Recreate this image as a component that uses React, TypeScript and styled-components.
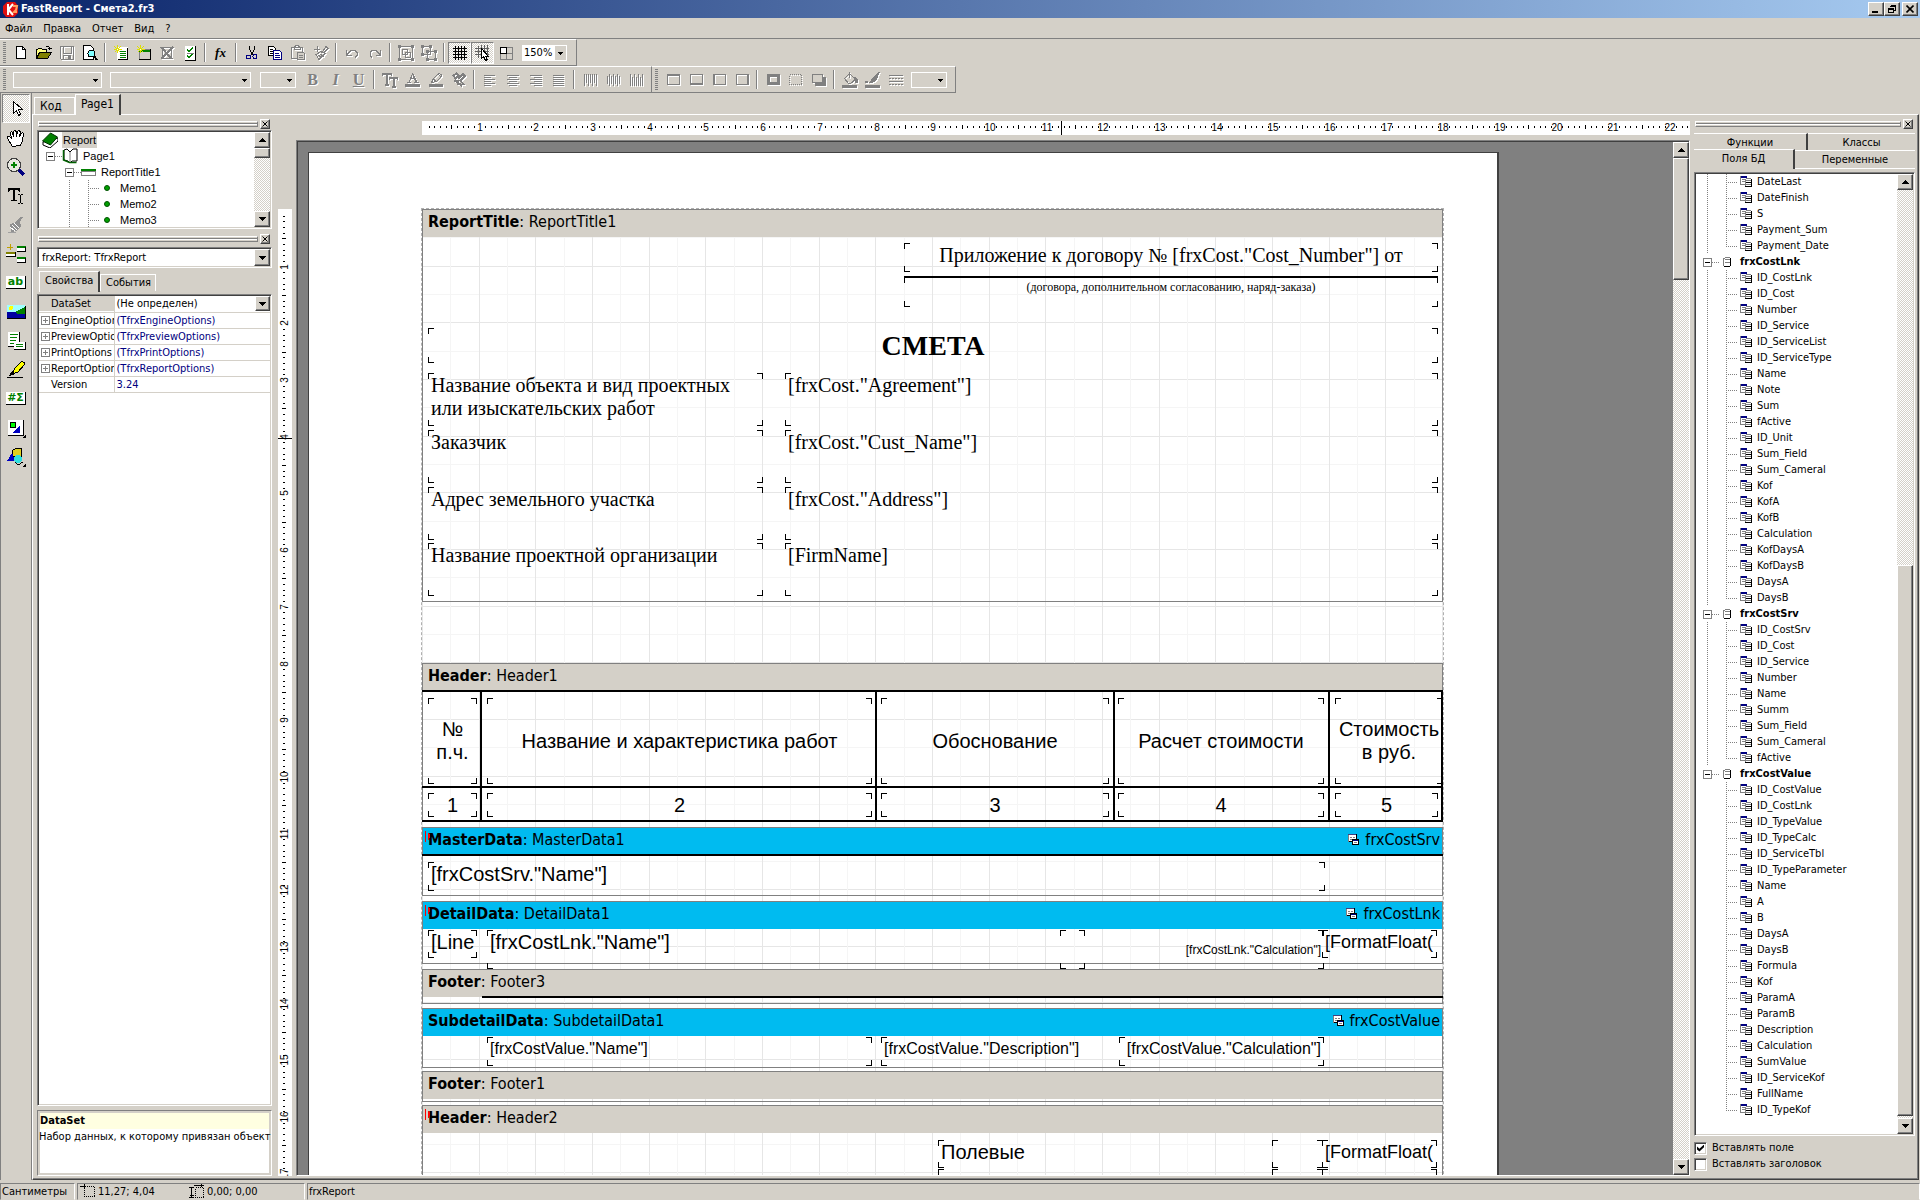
import React from "react";
import styled, { createGlobalStyle, css } from "styled-components";

const UI = `"DejaVu Sans Condensed", "Noto Sans", sans-serif`;
const SANS = `"Liberation Sans", Arial, sans-serif`;
const SERIF = `"Liberation Serif", "Times New Roman", serif`;
const FACE = "#d4d0c8";
const SHADE = "#808080";
const DARK = "#404040";

const GlobalStyle = createGlobalStyle`
  *, *::before, *::after { box-sizing: border-box; }
  body { margin: 0; background: ${FACE}; }
  button, input, select { font: inherit; color: inherit; margin: 0; padding: 0; border-radius: 0; }
  svg { display: block; flex: none; }
`;

const raised = css`
  background: ${FACE};
  border: 1px solid;
  border-color: #fff ${DARK} ${DARK} #fff;
  box-shadow: inset -1px -1px 0 ${SHADE};
`;
const sunken = css`
  border: 1px solid;
  border-color: ${SHADE} #fff #fff ${SHADE};
  box-shadow: inset 1px 1px 0 ${DARK}, inset -1px -1px 0 ${FACE};
  padding: 1px;
`;
const dither = css`
  background: repeating-conic-gradient(#fff 0 25%, ${FACE} 0 50%) 0 0 / 2px 2px;
`;

/* ---------- window frame ---------- */
const Window = styled.div`
  display: flex; flex-direction: column; height: 100vh; overflow: hidden;
  background: ${FACE}; color: #000; font: 11px/16px ${UI}; cursor: default;
`;
const TitleBar = styled.header`
  display: flex; align-items: center; flex: none; height: 18px; padding: 0 2px; gap: 2px;
  background: linear-gradient(90deg, #0a246a, #a6caf0);
`;
const TitleText = styled.h1`
  flex: 1; margin: 0; color: #fff; font: bold 11px/18px ${UI};
`;
const CaptionButton = styled.button<{ $apart?: boolean }>`
  ${raised}
  display: grid; place-items: center; width: 16px; height: 14px;
  margin-left: ${p => (p.$apart ? 0 : -2)}px;
`;
const MenuBar = styled.nav`
  display: flex; flex: none; height: 20px; gap: 1px;
`;
const MenuItem = styled.button`
  border: 0; background: none; padding: 0 5px; line-height: 19px;
`;
const Dock = styled.div`
  flex: none; border-top: 1px solid ${SHADE};
`;
const DockRow = styled.div`display: flex;`;
const Toolbar = styled.div`
  display: flex; align-items: center; height: 27px; padding: 0 4px 0 3px;
  border: 1px solid; border-color: #fff ${SHADE} ${SHADE} #fff; border-left-width: 0;
`;
const GripDots = styled.span`
  width: 3px; height: 21px; margin-right: 3px;
  background: repeating-linear-gradient(${SHADE} 0 1px, transparent 1px 2px);
`;
const Sep = styled.span`
  width: 2px; height: 19px; margin: 0 3px; background: ${SHADE}; border-right: 1px solid #fff;
`;
const ToolButton = styled.button<{ $on?: boolean }>`
  display: grid; place-items: center; width: 23px; height: 22px; border: 0; background: none;
  ${p => p.$on && css`${dither} border: 1px solid; border-color: ${SHADE} #fff #fff ${SHADE};`}
  &:disabled svg { filter: drop-shadow(1px 1px 0 #fff); }
`;
const FlatCombo = styled.label<{ $w: number; $filled?: boolean; $gap?: number }>`
  display: flex; position: relative; width: ${p => p.$w}px; height: 16px; margin: 0 ${p => p.$gap ?? 4}px;
  border: 1px solid #fff; background: ${p => (p.$filled ? "#fff" : FACE)};
  & > svg { position: absolute; right: 0; top: 0; width: 11px; height: 14px; background: ${FACE}; pointer-events: none; }
`;
const BareSelect = styled.select`
  appearance: none; border: 0; background: none; width: 100%; outline: 0; padding-left: 1px; font-size: 11px; line-height: 14px;
`;

/* ---------- body ---------- */
const Body = styled.div`display: flex; flex: 1; min-height: 0;`;
const Palette = styled.div`
  display: flex; flex-direction: column; flex: none; width: 32px; padding: 1px 1px 0;
  border-left: 1px solid ${SHADE}; border-right: 1px solid ${SHADE};
`;
const PaletteButton = styled.button<{ $on?: boolean }>`
  display: grid; place-items: center; height: 29px; border: 0; background: none;
  ${p => p.$on && css`${dither} border: 1px solid; border-color: ${SHADE} #fff #fff ${SHADE};`}
`;
const Designer = styled.div`display: flex; flex-direction: column; flex: 1; min-width: 0;`;
const TabStrip = styled.div<{ $h: number }>`
  display: flex; align-items: flex-end; flex: none; height: ${p => p.$h}px; padding-left: 2px;
`;
const Tab = styled.button<{ $on?: boolean; $w: number; $big?: boolean }>`
  width: ${p => p.$w}px; height: ${p => (p.$on ? 21 : 17)}px; text-align: left; padding: 0 5px;
  font-size: ${p => (p.$big ? 12 : 11)}px; line-height: 16px; white-space: nowrap;
  background: ${FACE}; border: 1px solid #fff; border-bottom: 0;
  border-right: ${p => (p.$on ? `2px solid ${DARK}` : "1px solid #fff")};
  ${p => p.$on && css`position: relative; margin-bottom: -1px; padding-bottom: 2px;`}
`;
const TabPage = styled.div`
  display: flex; flex: 1; min-height: 0; margin-right: 1px;
  border: 1px solid; border-color: #fff ${DARK} ${DARK} #fff; box-shadow: inset -1px -1px 0 ${SHADE};
`;
const SidePanel = styled.aside<{ $side: "l" | "r" }>`
  display: flex; flex-direction: column; flex: none; min-height: 0;
  width: ${p => (p.$side === "l" ? 241 : 227)}px;
  padding: ${p => (p.$side === "l" ? "3px 2px 3px 4px" : "3px 3px 7px 3px")};
`;
const Grip = styled.div`
  display: flex; align-items: center; flex: none; height: 12px; gap: 2px; padding: 0 2px 0 1px;
`;
const GripLines = styled.span`
  flex: 1; height: 6px; border: 1px solid; border-color: #fff ${SHADE} ${SHADE} #fff;
  background: linear-gradient(${FACE} 0 1px, ${SHADE} 1px 2px, #fff 2px 3px, ${FACE} 3px);
`;
const CloseButton = styled.button`
  ${raised}
  display: grid; place-items: center; width: 10px; height: 10px;
`;

/* ---------- scroll bar ---------- */
const ScrollTrack = styled.div`
  ${dither}
  display: flex; flex-direction: column; flex: none; width: 16px;
`;
const ScrollArrow = styled.button`
  ${raised}
  display: grid; place-items: center; flex: none; width: 16px; height: 16px;
`;
const ScrollGap = styled.div<{ $grow: number }>`flex: ${p => p.$grow} 0 0;`;
const ScrollThumb = styled.div<{ $grow: number }>`
  ${raised}
  flex: ${p => p.$grow} 0 0;
`;
function Triangle({ up }: { up?: boolean }) {
  return (
    <svg width="7" height="4" shapeRendering="crispEdges">
      {[0, 1, 2, 3].map(i => (
        <rect key={i} x={up ? 3 - i : i} y={i} width={up ? 1 + 2 * i : 7 - 2 * i} height="1" />
      ))}
    </svg>
  );
}
function ScrollBar({ before, thumb, after }: { before: number; thumb: number; after: number }) {
  return (
    <ScrollTrack>
      <ScrollArrow aria-label="Вверх"><Triangle up /></ScrollArrow>
      <ScrollGap $grow={before} />
      <ScrollThumb $grow={thumb} />
      <ScrollGap $grow={after} />
      <ScrollArrow aria-label="Вниз"><Triangle /></ScrollArrow>
    </ScrollTrack>
  );
}

/* ---------- trees ---------- */
const TreeBox = styled.div<{ $h?: number }>`
  ${sunken}
  display: flex; background: #fff; overflow: hidden;
  ${p => (p.$h ? css`flex: none; height: ${p.$h}px;` : css`flex: 1; min-height: 0;`)}
`;
const TreeRows = styled.ul<{ $face?: string }>`
  flex: 1; margin: 0; padding: 0; list-style: none; overflow: hidden; white-space: nowrap;
  font-family: ${p => p.$face ?? UI};
`;
const TreeRow = styled.li<{ $pad?: number }>`
  display: flex; align-items: center; height: 16px; padding-left: ${p => p.$pad ?? 0}px;
`;
const TreeLine = styled.span<{ $w: number; $v?: "full" | "top" | "none"; $h?: boolean }>`
  flex: none; align-self: stretch; width: ${p => p.$w}px;
  background:
    repeating-linear-gradient(${SHADE} 0 1px, transparent 1px 2px) 0 0 / 1px ${p => (p.$v === "none" ? 0 : p.$v === "top" ? "9px" : "100%")} no-repeat,
    repeating-linear-gradient(90deg, ${SHADE} 0 1px, transparent 1px 2px) 0 8px / ${p => (p.$h ? "100%" : 0)} 1px no-repeat;
`;
const TreeText = styled.span<{ $bold?: boolean; $sel?: boolean; $gap?: number }>`
  margin-left: ${p => p.$gap ?? 4}px; padding: 0 1px; font-weight: ${p => (p.$bold ? "bold" : "normal")};
  background: ${p => (p.$sel ? FACE : "none")};
`;
function Toggle({ plus }: { plus?: boolean }) {
  return (
    <svg width="9" height="9" shapeRendering="crispEdges">
      <rect width="9" height="9" fill={SHADE} />
      <rect x="1" y="1" width="7" height="7" fill="#fff" />
      <rect x="2" y="4" width="5" height="1" fill={plus ? SHADE : "#000"} />
      {plus && <rect x="4" y="2" width="1" height="5" fill={SHADE} />}
    </svg>
  );
}
function FieldIcon() {
  return (
    <svg width="12" height="12" shapeRendering="crispEdges">
      <rect x="0" y="0" width="7" height="9" fill={SHADE} />
      <rect x="1" y="2" width="6" height="6" fill="#fff" />
      <rect x="1" y="0" width="6" height="2" fill="#000080" />
      <path d="M2 3h3v1h-3zM2 5h3v1h-3z" fill={SHADE} />
      <path d="M6 2h5v1h-5z" fill={SHADE} />
      <path d="M5 6h7v1h-7zM5 10h7v1h-7zM11 3h1v8h-1z" />
      <path d="M6 3h5v3h-5zM6 7h5v3h-5z" fill="#fff" />
      <path d="M6 4h5v1h-5zM6 8h5v1h-5zM5 3h1v7h-1z" fill={SHADE} />
    </svg>
  );
}
function DatasetIcon() {
  return (
    <svg width="9" height="10" shapeRendering="crispEdges">
      <path d="M1 1h6v8h-6z" fill="#fff" />
      <path d="M2 0h5v1h-5zM0 1h2v1h-2zM0 2h1v7h-1zM2 2h5v1h-5zM2 5h5v1h-5z" fill={SHADE} />
      <path d="M7 1h1v8h-1zM1 9h6v1h-6z" />
    </svg>
  );
}
const BandDataIcon = () => (
  <svg width="11" height="11" shapeRendering="crispEdges">
    <rect width="9" height="8" fill={SHADE} />
    <rect x="1" y="1" width="7" height="6" fill="#fff" />
    <path d="M8 0h1v8h-1zM1 7h8v1h-8z" />
    <rect width="8" height="1" fill="#404080" />
    <path d="M2 3h2v1h-2zM5 3h2v1h-2zM2 5h2v1h-2z" fill={SHADE} />
    <rect x="4" y="5" width="7" height="6" />
    <rect x="5" y="6" width="5" height="4" fill="#fff" />
    <rect x="5" y="6" width="5" height="1" fill="#000080" />
    <rect x="6" y="8" width="3" height="1" fill={SHADE} />
  </svg>
);

/* ---------- object inspector ---------- */
const ComboBox = styled.label`
  ${sunken}
  display: flex; position: relative; flex: none; height: 21px; margin-top: 2px; padding-left: 3px; background: #fff;
`;
const Drop = styled.span`
  ${raised}
  display: grid; place-items: center; position: absolute; right: 1px; top: 1px; bottom: 1px; width: 16px; pointer-events: none;
`;
const GridBox = styled.div`
  ${sunken}
  flex: 1; min-height: 0; margin-top: 3px; background: #fff;
`;
const PropTable = styled.table`
  width: 100%; table-layout: fixed; border-collapse: collapse; border-spacing: 0;
  th, td { height: 16px; padding: 0; border-bottom: 1px solid ${FACE}; line-height: 15px; text-align: left; font-weight: normal; overflow: hidden; white-space: nowrap; }
  th { width: 75px; border-right: 1px solid ${FACE}; }
`;
const PropName = styled.span<{ $sel?: boolean }>`
  display: flex; align-items: center; gap: 1px; height: 15px; padding-left: 2px; overflow: hidden; background: ${p => (p.$sel ? FACE : "none")};
`;
const NoToggle = styled.span`width: 9px; flex: none;`;
const PropValue = styled.span<{ $sel?: boolean }>`
  display: flex; position: relative; height: 15px; padding-left: 2px; color: ${p => (p.$sel ? "#000" : "#000080")};
  ${Drop} { top: 0; right: 0; bottom: 0; width: 15px; }
`;
const HintBox = styled.div`
  flex: none; height: 66px; margin-top: 4px; padding: 2px 0 2px 1px; background: #fff; overflow: hidden; white-space: nowrap;
  border: 1px solid; border-color: ${SHADE} #fff #fff ${SHADE}; box-shadow: inset 0 0 0 2px ${FACE};
`;
const HintTitle = styled.div`background: #ffffe1; font-weight: bold; margin: 0 2px 0 1px;`;

/* ---------- work area ---------- */
const Center = styled.main`
  flex: 1; min-width: 0; display: grid; padding: 6px 1px 3px 4px;
  grid-template: 14px minmax(0, 1fr) / 14px minmax(0, 1fr); gap: 5px 4px;
`;
const TopRuler = styled.div`grid-column: 2; margin-left: 126px; background: #fff; overflow: hidden;`;
const SideRuler = styled.div`grid-row: 2; margin-top: 69px; background: #fff; overflow: hidden;`;
const Workspace = styled.div`
  grid-row: 2; grid-column: 2; display: flex; min-height: 0; background: ${SHADE};
  border: 1px solid; border-color: ${SHADE} #fff #fff ${SHADE}; box-shadow: inset 1px 1px 0 ${DARK};
  padding: 1px 0 0 1px;
`;
const Canvas = styled.div`flex: 1; min-width: 0; overflow: hidden; padding: 10px;`;
const Paper = styled.div`
  width: 1191px; padding: 55px 53px 0 112px; background: #fff;
  border: 1px solid ${DARK}; border-right-width: 2px; border-bottom: 0;
`;
/* three centimetres make one 170px tile at this zoom */
const Margins = styled.div`
  border: 1px dashed #b0b0b0; border-bottom: 0;
  background:
    linear-gradient(90deg, #e6e6e6 0 1px, transparent 1px 28px, #f5f5f5 28px 29px, transparent 29px 57px, #e6e6e6 57px 58px, transparent 58px 85px, #f5f5f5 85px 86px, transparent 86px 113px, #e6e6e6 113px 114px, transparent 114px 142px, #f5f5f5 142px 143px, transparent 143px) 0 0 / 170px 100% ,
    linear-gradient(#e6e6e6 0 1px, transparent 1px 28px, #f5f5f5 28px 29px, transparent 29px 57px, #e6e6e6 57px 58px, transparent 58px 85px, #f5f5f5 85px 86px, transparent 86px 113px, #e6e6e6 113px 114px, transparent 114px 142px, #f5f5f5 142px 143px, transparent 143px) 0 0 / 100% 170px;
`;
const BandBox = styled.section<{ $gap: number }>`margin-top: ${p => p.$gap}px; border: 1px solid ${SHADE};`;
const BandHead = styled.div<{ $data?: boolean }>`
  display: flex; position: relative; align-items: center; gap: 6px; height: 27px; padding: 0 2px 4px 5px;
  background: ${p => (p.$data ? "#00bbf0" : FACE)}; font: 16px/22px ${UI};
`;
const BandName = styled.span`flex: 1;`;
const Mark = styled.svg`position: absolute; left: 2px; top: 3px; z-index: 1;`;
const BandBody = styled.div<{ $h: number }>`position: relative; height: ${p => p.$h}px;`;

type MemoProps = { $x: number; $y: number; $w: number; $h: number; $font?: "serif" | "sans"; $size?: number; $align?: string; $mid?: boolean; $bold?: boolean };
const k = "linear-gradient(#000 0 0)";
/* report objects lie on a free canvas and show only their corners */
const Memo = styled.div<MemoProps>`
  position: absolute; left: ${p => p.$x}px; top: ${p => p.$y}px; width: ${p => p.$w}px; height: ${p => p.$h}px;
  display: flex; align-items: ${p => (p.$mid ? "center" : "flex-start")};
  justify-content: ${p => p.$align ?? "flex-start"}; text-align: ${p => (p.$align === "center" ? "center" : "left")};
  padding: ${p => (p.$mid ? 0 : 1)}px 3px 0; white-space: pre;
  font: ${p => (p.$bold ? "bold" : "normal")} ${p => p.$size ?? 20}px / ${p => (p.$size === 16 ? 22 : p.$size === 12 ? 18 : 23)}px ${p => (p.$font === "sans" ? SANS : SERIF)};
  background:
    ${k} 0 0 / 6px 1px, ${k} 0 0 / 1px 6px, ${k} 100% 0 / 6px 1px, ${k} 100% 0 / 1px 6px,
    ${k} 0 100% / 6px 1px, ${k} 0 100% / 1px 6px, ${k} 100% 100% / 6px 1px, ${k} 100% 100% / 1px 6px;
  background-repeat: no-repeat;
`;
const Rule = styled.div<{ $x: number; $y: number; $w: number; $h: number }>`
  position: absolute; left: ${p => p.$x}px; top: ${p => p.$y}px; width: ${p => p.$w}px; height: ${p => p.$h}px; background: #000;
`;

const CM = 56.69;
function Ticks({ vertical, cm, cursor }: { vertical?: boolean; cm: number; cursor: number }) {
  const marks: React.ReactNode[] = [];
  for (let i = 1; i < cm * 10; i++) {
    const at = Math.round(1 + (i * CM) / 10);
    if (i % 10 === 0) {
      marks.push(
        <text key={i} textAnchor="middle" fontSize="10" fontFamily="Liberation Sans, sans-serif"
          transform={vertical ? `translate(10 ${at}) rotate(-90)` : `translate(${at} 10)`}>{i / 10}</text>
      );
    } else {
      const len = i % 5 === 0 ? 4 : 2;
      const off = len === 4 ? 4 : 5;
      marks.push(vertical
        ? <rect key={i} x={off} y={at} width={len} height="1" />
        : <rect key={i} x={at} y={off} width="1" height={len} />);
    }
  }
  const c = Math.round(1 + cursor * CM);
  const size = Math.ceil(cm * CM);
  return (
    <svg width={vertical ? 14 : size} height={vertical ? size : 14} shapeRendering="crispEdges">
      {marks}
      {vertical ? <rect x="0" y={c - 1} width="14" height="1" /> : <rect x={c - 1} y="0" width="1" height="14" />}
    </svg>
  );
}

function Band({ gap = 0, kind, name, data, mark, h, children }: {
  gap?: number; kind: string; name: string; data?: string; mark?: boolean; h: number; children?: React.ReactNode;
}) {
  return (
    <BandBox $gap={gap}>
      <BandHead $data={kind.endsWith("Data")}>
        {mark && (
          <Mark width="6" height="11" shapeRendering="crispEdges" fill="#f00">
            <path d="M0 0h1v11h-1zM3 2h1v7h-1zM4 3h1v4h-1z" />
          </Mark>
        )}
        <BandName><b>{kind}</b>: {name}</BandName>
        {data && <><BandDataIcon /><span>{data}</span></>}
      </BandHead>
      <BandBody $h={h}>{children}</BandBody>
    </BandBox>
  );
}

/* ---------- right panel ---------- */
const WideTabs = styled.div<{ $first?: boolean }>`
  display: flex; align-items: flex-end; flex: none; height: ${p => (p.$first ? 20 : 18)}px;
  margin-top: ${p => (p.$first ? 1 : 0)}px; border-bottom: ${p => (p.$first ? 0 : 1)}px solid #fff;
`;
const WideTab = styled.button<{ $on?: boolean; $edge?: boolean; $w?: number }>`
  flex: ${p => (p.$w ? `0 0 ${p.$w}px` : "1")}; height: ${p => (p.$on ? 20 : 18)}px; line-height: 17px; padding: 0;
  background: ${FACE}; border: 0; border-top: 1px solid #fff;
  ${p => p.$edge && css`border-right: 2px solid ${DARK};`}
  ${p => p.$on && css`position: relative; margin-bottom: -1px; padding-bottom: 4px;`}
`;
const CheckLine = styled.label`
  display: flex; align-items: center; flex: none; height: 16px; gap: 5px;
`;
const CheckInput = styled.input`
  ${sunken}
  appearance: none; width: 13px; height: 13px; background: #fff; display: grid; place-items: center;
  &:checked::before { content: ""; width: 7px; height: 7px; background: #000; clip-path: polygon(0 30%, 35% 60%, 100% 0, 100% 40%, 35% 100%, 0 70%); }
`;
const Checks = styled.div`margin-top: 4px; flex: none;`;

/* ---------- status bar ---------- */
const StatusBar = styled.footer`display: flex; flex: none; height: 20px; padding-top: 3px; gap: 2px;`;
const StatusCell = styled.div<{ $w?: number }>`
  display: flex; align-items: center; gap: 4px; padding: 0 1px; line-height: 16px; white-space: nowrap;
  ${p => (p.$w ? css`width: ${p.$w}px;` : css`flex: 1;`)}
  border: 1px solid; border-color: ${SHADE} #fff ${FACE} ${SHADE};
`;
const StatusPair = styled.span`display: flex; gap: 2px; width: 105px; padding-left: 1px;`;

/* ---------- icons ---------- */
const G = "#808080";
const Ico = ({ children, s = 16 }: { children: React.ReactNode; s?: number }) => (
  <svg width={s} height={s} viewBox={`0 0 ${s} ${s}`} shapeRendering="crispEdges" fill="none">{children}</svg>
);
const O = (d: string, stroke = "#000", fill = "none", w = 1) => <path d={d} stroke={stroke} fill={fill} strokeWidth={w} />;
const F = (d: string, fill = "#000") => <path d={d} fill={fill} />;
const star = <>{O("M4.5 0v8M0.5 4.5h8M1.5 1.5l6 6M7.5 1.5l-6 6", "#e0e000")}{F("M4 4h1v1h-1z", "#fff")}</>;
const sheet = "M3.5 1.5h6l3 3v9h-9z";

const icons: Record<string, React.ReactNode> = {
  new: <Ico>{O(sheet, "#000", "#fff")}{O("M9.5 1.5v3h3")}</Ico>,
  open: <Ico>{O("M.5 13.500v-9h1l1-1h3l1 1h4v3", "#000", "#ffff80")}{O("M.5 13.500l3-6h12l-4 6z", "#000", "#808000")}{O("M9.500 2.500l1-1h2l1 1v2M11.500 3.500h4")}</Ico>,
  save: <Ico>{O("M1.5 1.5h13v13h-12l-1-1zM4 2v6h8v-6M4.500 14v-4h7v4", G)}{F("M9 11h2v3h-2z", G)}</Ico>,
  preview: <Ico>{O("M1.500 .5h7l3 3v11h-10z", "#000", "#fff")}<circle cx="9.500" cy="8.500" r="3.500" stroke="#000" fill="#80ffff" />{O("M12 11l3 4", "#000", "none", 2)}</Ico>,
  addpage: <Ico>{O("M4.500 2.500h10v12h-10z", "#fff", "#fff")}{O("M14.500 3v12M5 14.500h10")}{O("M7 6.500h6M7 8.500h6M7 10.500h6M7 12.500h6", "#008000")}{star}</Ico>,
  adddlg: <Ico>{O("M3.500 4.500h11v10h-11z", G, "#d4d0c8")}{O("M3 5.500h12", "#008000", "none", 2)}{O("M14.500 4v11M3 14.500h12")}{star}</Ico>,
  delpage: <Ico>{O("M3.500 2.500h9v11h-9z", G)}{O("M2 2l11 12M14 2l-12 12", G, "none", 2)}</Ico>,
  settings: <Ico>{F("M3 1h10v14h-10z", "#fff")}{O("M13.500 1v14M3 15.500h11")}{O("M5 4.500l2 2 4-4M5 10.500l2 2 4-4", "#008000")}{O("M5 8.500h7", G)}</Ico>,
  cut: <Ico>{O("M5.500 .5v4l4 6M10.500 .5v4l-4 6", "#000")}<circle cx="4.500" cy="12" r="2" stroke="#000080" /><circle cx="11" cy="11.500" r="2" stroke="#000080" /></Ico>,
  copy: <Ico>{O("M1.500 1.500h5l2 2v7h-7z", "#000", "#fff")}{O("M3 4.500h3M3 6.500h4M3 8.500h3")}{O("M6.500 5.500h6l2 2v7h-8z", "#000080", "#fff")}{O("M8 8.500h4M8 10.500h5M8 12.500h5", "#000080")}</Ico>,
  paste: <Ico>{O("M1.500 2.500h11v11h-11zM4 4.500h6v-2l-2-2h-2l-2 2z", G)}{O("M7.500 7.500h6l1 1v6h-7z", G, "#d4d0c8")}{O("M9 10.500h4M9 12.500h4", G)}</Ico>,
  brush: <Ico>{O("M1 4.500h6M4.500 1v6M13 1.500l2 2-4 4 1 1-6 6-3-5 5-3 1 1z", G)}{O("M5 10l4 3M7 9l4 3", G)}</Ico>,
  undo: <Ico>{O("M2.500 5v5h5M3 9.500l4-4h4l2 2v3l-2 2", G)}</Ico>,
  redo: <Ico>{O("M13.500 5v5h-5M13 9.500l-4-4h-4l-2 2v3l2 2", G)}</Ico>,
  group: <Ico>{O("M1.500 2v12M2 1.500h12M14.500 2v12M2 14.500h12", G)}{O("M4.500 4.500h5v5h-5zM7.500 7.500h5v5h-5z", G)}{F("M0 0h3v3h-3zM13 0h3v3h-3zM0 13h3v3h-3zM13 13h3v3h-3z", G)}</Ico>,
  ungroup: <Ico>{O("M1.500 1.500h8v8h-8zM6.500 6.500h8v8h-8z", G)}{F("M0 0h3v3h-3zM8 0h3v3h-3zM0 8h3v3h-3zM5 5h3v3h-3zM13 5h3v3h-3zM13 13h3v3h-3zM5 13h3v3h-3z", G)}</Ico>,
  grid: <Ico>{O("M3.500 1v14M6.500 1v14M9.500 1v14M12.500 1v14M1 3.500h14M1 6.500h14M1 9.500h14M1 12.500h14")}</Ico>,
  snap: <Ico>{O("M3.500 1v12M6.500 0v12M9.500 0v12M12.500 0v12M0 3.500h14M0 6.500h14M0 9.500h14", "#606060")}{O("M6.500 3.500v10l2-2 2 4 2-1-2-3h3z", "#000", "#fff")}</Ico>,
  fit: <Ico>{O("M8.500 2v12M14.500 2v12M2.500 8v6M2 8.500h12M8 2.500h6M2 14.500h13", G)}{O("M2.500 2.500h6v6h-6z", "#000", "#fff")}</Ico>,
  size: <Ico>{F("M0 1h10v3h-1v-1h-3v9h1v2h-4v-2h1v-9h-3v1h-1zM7 5h9v3h-1v-1h-2v7h1v2h-4v-2h1v-7h-3v1h-1z", G)}</Ico>,
  fontcolor: <Ico>{O("M4 10l3.500-8 3.500 8M5 6.500h5M2 10.500h4M9 10.500h5M8 2l4 8", G)}{F("M0 12h15v3h-15z", G)}</Ico>,
  marker: <Ico>{O("M3.500 10.500l2-4 5-5 3 1v2l-5 5zM5 7l3 2M10 2l3 3", G)}{F("M1 12h14v3h-14z", G)}</Ico>,
  rotate: <Ico>{O("M2.500 3.500l3-2 2 2-3 3zM7 7l5-5 2 2-5 5M4 8l7 6M9 8l4 5M3 9h4v4", G, "none", 2)}</Ico>,
  left: <Ico>{O("M2 3.500h11M2 5.500h7M2 7.500h11M2 9.500h7M2 11.500h11M2 13.500h7", G)}</Ico>,
  center: <Ico>{O("M2 3.500h12M4 5.500h8M2 7.500h12M4 9.500h8M2 11.500h12M4 13.500h8", G)}</Ico>,
  right: <Ico>{O("M2 3.500h12M6 5.500h8M2 7.500h12M6 9.500h8M2 11.500h12M6 13.500h8", G)}</Ico>,
  justify: <Ico>{O("M2 3.500h11M2 5.500h11M2 7.500h11M2 9.500h11M2 11.500h11M2 13.500h11", G)}</Ico>,
  vtop: <Ico>{O("M2.500 2v12M4.500 2v9M6.500 2v12M8.500 2v9M10.500 2v12M12.500 2v9M14.500 2v12", G)}</Ico>,
  vmid: <Ico>{O("M2.500 4v8M4.500 2v12M6.500 4v8M8.500 2v12M10.500 4v8M12.500 2v12M14.500 4v8", G)}</Ico>,
  vbot: <Ico>{O("M2.500 2v12M4.500 5v9M6.500 2v12M8.500 5v9M10.500 2v12M12.500 5v9M14.500 2v12", G)}</Ico>,
  ftop: <Ico>{O("M2.500 3v9.500h12v-9.500", G)}{F("M2 2h13v2h-13z", G)}</Ico>,
  fbottom: <Ico>{O("M2.500 13v-10.500h12v10.500", G)}{F("M2 11h13v2h-13z", G)}</Ico>,
  fleft: <Ico>{O("M3 2.500h11.500v10h-11.500", G)}{F("M2 2h2v11h-2z", G)}</Ico>,
  fright: <Ico>{O("M13 2.500h-10.500v10h10.500", G)}{F("M13 2h2v11h-2z", G)}</Ico>,
  fall: <Ico>{O("M3.500 3.500h10v8h-10z", G, "none", 3)}</Ico>,
  fnone: <Ico><path d="M1.500 2.500h12v10h-12z" stroke={G} strokeDasharray="1 1" /></Ico>,
  fshadow: <Ico>{F("M4 5h11v9h-11z", G)}{O("M1.500 2.500h10v8h-10z", G, "#d4d0c8")}</Ico>,
  fill: <Ico>{O("M2.500 6.500l5-5 6 6-5 4h-2zM7 0v6M12 5l3 2v4", G)}{F("M12 6h3v5h-2zM0 13h15v3h-15z", G)}</Ico>,
  pen: <Ico>{F("M6 8l7-8h2l-4 9-4 2h-3z", G)}{F("M0 9h3v2h-3zM0 13h15v3h-15z", G)}</Ico>,
  lines: <Ico>{O("M1 3.500h14", G)}<path d="M1 6.500h14M1 12.500h14" stroke={G} strokeDasharray="2 1" />{O("M1 9.500h14", G)}</Ico>,
};

const paletteIcons: Record<string, React.ReactNode> = {
  "Выбор": <Ico s={20}>{O("M7.500 2.500v12l3-3 2 5 2-1-2-5h4z", "#000", "#fff")}</Ico>,
  "Рука": <Ico s={20}>{O("M6.500 18.500l-5-8v-2h2l2 2-1-6 1-1 1 1 1 4v-5l1-1 2 1v5l1-5 1-1 2 1-1 5 2-3 1-1 1 1-1 7-2 5z", "#000", "#fff")}</Ico>,
  "Масштаб": <Ico s={20}><circle cx="8" cy="8" r="6.500" stroke="#404040" fill="#e8e8e0" />{O("M5 8h6M8 5v6", "#008000", "none", 2)}{O("M13 13l5 5", "#000080", "none", 3)}</Ico>,
  "Текст": <Ico s={20}>{F("M2 2h12v4h-1l-1-2h-3v10h2v1h-6v-1h2v-10h-3l-1 2h-1z")}{O("M12 8.500h2M15 8.500h2M14.500 9v8M12 17.500h2M15 17.500h2")}</Ico>,
  "Формат": <Ico s={20}>{F("M4 9l6-2 4-5h3l-3 5 1 4-5 5-5 1z", "#909090")}{O("M4 12l5 4M6 10l5 5M8 8l5 5", "#fff")}{O("M2 17.500h8", "#a0a0a0")}</Ico>,
  "Бэнд": <Ico s={20}>{O("M1 3.500h6M4.500 0v6", "#c0a000")}{F("M0 8h9v2h-9z", "#808000")}{F("M0 10h9v2h-9zM11 4h8v3h-8zM11 15h8v3h-8z", "#fff")}{F("M11 2h9v2h-9zM11 13h9v2h-9z", "#008000")}{O("M0 12.500h10M11 7.500h9M11 18.500h9M19.500 3v5M19.500 14v5M9.500 8v5")}</Ico>,
  "Рисунок": <Ico s={20}>{F("M1 3h18v7h-18z", "#a0ffff")}{F("M1 10h18v6h-18z", "#0000a0")}{F("M9 10l10-5v7h-8z", "#008000")}<circle cx="5" cy="6" r="2" fill="#ff0" />{O("M1 16.500h19M19.500 4v12")}</Ico>,
  "Вложенный отчет": <Ico s={20}>{F("M2 1h12v14h-12z", "#fff")}{O("M13.500 1v14M2 15.500h12")}{O("M4 3.500h8M4 6.500h7M4 9.500h6M4 12.500h4", "#008000")}{F("M8 11h11v7h-11z", "#fff")}{O("M8 18.500h12M19.500 11v8")}{O("M10 13.500h7M10 15.500h7", "#008000")}</Ico>,
  "Маркер": <Ico s={20}>{O("M6.500 13.500l2-5 7-7 3 1v2l-7 8z", "#000", "#ff0")}{F("M3 16l3-5 3 3z")}{O("M1 17.500h16")}</Ico>,
  "Фигура": <Ico s={20}>{F("M2 2h15v15h-15z", "#fff")}{O("M2 17.500h16M17.500 2v16")}<circle cx="7" cy="7" r="3" fill="#0f0" stroke="#000" />{F("M14 7v8h-8z", "#0000c0")}{F("M20 16v4h-4z")}</Ico>,
  "Диаграмма": <Ico s={20}>{O("M6.500 3.500l3-2h6v8h-9z", "#000", "#e0d020")}{F("M1 14l5-8 3 8z", "#0000c0")}<circle cx="12" cy="12" r="4" fill="#30e0e0" />{O("M9 15l3 3 5-3", "#000")}{F("M20 16v4h-4z")}</Ico>,
};
const GreenLabel = styled.span`
  display: block; width: 20px; height: 13px; background: #fff; color: #008000; text-align: center;
  font: bold 11px/12px "DejaVu Sans", sans-serif; border-right: 1px solid #000; border-bottom: 1px solid #000;
`;
const Letter = styled.span<{ $slant?: boolean; $line?: boolean }>`
  color: ${SHADE}; font: ${p => (p.$slant ? "italic" : "normal")} bold 16px/18px ${SERIF}; text-shadow: 1px 1px 0 #fff;
  text-decoration: ${p => (p.$line ? "underline" : "none")};
`;
const Fx = styled.span`font: italic bold 13px/16px ${SERIF};`;
const Tool = ({ id, on, off, label }: { id: string; on?: boolean; off?: boolean; label?: string }) => (
  <ToolButton aria-label={label ?? id} $on={on} disabled={off}>{icons[id]}</ToolButton>
);
const Offs = ({ ids }: { ids: string[] }) => <>{ids.map(i => <Tool key={i} id={i} off />)}</>;
const ComboArrow = () => (
  <svg viewBox="0 0 11 14" shapeRendering="crispEdges"><path d="M3 6h5v1h-5zM4 7h3v1h-3zM5 8h1v1h-1z" /></svg>
);
const Cross = () => (
  <svg width="6" height="6" viewBox="0 0 6 6"><path d="M.5 .5l5 5M5.500 .5l-5 5" stroke="#000" /></svg>
);

/* ---------- data ---------- */
const fieldGroups: { name?: string; fields: string[] }[] = [
  { fields: ["DateLast", "DateFinish", "S", "Payment_Sum", "Payment_Date"] },
  { name: "frxCostLnk", fields: ["ID_CostLnk", "ID_Cost", "Number", "ID_Service", "ID_ServiceList", "ID_ServiceType", "Name", "Note", "Sum", "fActive", "ID_Unit", "Sum_Field", "Sum_Cameral", "Kof", "KofA", "KofB", "Calculation", "KofDaysA", "KofDaysB", "DaysA", "DaysB"] },
  { name: "frxCostSrv", fields: ["ID_CostSrv", "ID_Cost", "ID_Service", "Number", "Name", "Summ", "Sum_Field", "Sum_Cameral", "fActive"] },
  { name: "frxCostValue", fields: ["ID_CostValue", "ID_CostLnk", "ID_TypeValue", "ID_TypeCalc", "ID_ServiceTbl", "ID_TypeParameter", "Name", "A", "B", "DaysA", "DaysB", "Formula", "Kof", "ParamA", "ParamB", "Description", "Calculation", "SumValue", "ID_ServiceKof", "FullName", "ID_TypeKof"] },
];
const properties = [
  { name: "DataSet", value: "(Не определен)", sel: true },
  { name: "EngineOptions", value: "(TfrxEngineOptions)", group: true },
  { name: "PreviewOptions", value: "(TfrxPreviewOptions)", group: true },
  { name: "PrintOptions", value: "(TfrxPrintOptions)", group: true },
  { name: "ReportOptions", value: "(TfrxReportOptions)", group: true },
  { name: "Version", value: "3.24" },
];
const titleRows = [
  { y: 136, label: "Название объекта и вид проектных\nили изыскательских работ", value: `[frxCost."Agreement"]` },
  { y: 193, label: "Заказчик", value: `[frxCost."Cust_Name"]` },
  { y: 250, label: "Адрес земельного участка", value: `[frxCost."Address"]` },
  { y: 306, label: "Название проектной организации", value: "[FirmName]" },
];
const columns = [
  { x: 5, w: 49, w2: 49, head: "№\nп.ч." },
  { x: 64, w: 385, w2: 385, head: "Название и характеристика работ" },
  { x: 458, w: 228, w2: 228, head: "Обоснование" },
  { x: 695, w: 206, w2: 206, head: "Расчет стоимости" },
  { x: 912, w: 108, w2: 103, head: "Стоимость\nв руб." },
];

function Report() {
  return (
    <Paper>
      <Margins>
        <Band kind="ReportTitle" name="ReportTitle1" h={364}>
          <Memo $x={481} $y={6} $w={534} $h={29} $align="center">{`Приложение к договору № [frxCost."Cost_Number"] от`}</Memo>
          <Rule $x={481} $y={39} $w={534} $h={2} />
          <Memo $x={481} $y={40} $w={534} $h={30} $size={12} $align="center">(договора, дополнительном согласованию, наряд-заказа)</Memo>
          <Memo $x={5} $y={91} $w={1010} $h={35} $size={28} $bold $mid $align="center">СМЕТА</Memo>
          {titleRows.map(r => (
            <React.Fragment key={r.y}>
              <Memo $x={5} $y={r.y} $w={335} $h={53}>{r.label}</Memo>
              <Memo $x={362} $y={r.y} $w={653} $h={53}>{r.value}</Memo>
            </React.Fragment>
          ))}
        </Band>
        <Band gap={61} kind="Header" name="Header1" h={130}>
          {[-1, 95, 129].map(y => <Rule key={y} $x={-1} $y={y} $w={1021} $h={2} />)}
          {[57, 452, 690, 905, 1018].map(x => <Rule key={x} $x={x} $y={0} $w={2} $h={130} />)}
          {columns.map((c, i) => (
            <React.Fragment key={c.x}>
              <Memo $x={c.x} $y={7} $w={c.w} $h={86} $font="sans" $mid $align="center">{c.head}</Memo>
              <Memo $x={c.x} $y={102} $w={c.w2} $h={24} $font="sans" $mid $align="center">{i + 1}</Memo>
            </React.Fragment>
          ))}
        </Band>
        <Band gap={5} kind="MasterData" name="MasterData1" data="frxCostSrv" mark h={40}>
          <Rule $x={-1} $y={-1} $w={1021} $h={2} />
          <Memo $x={5} $y={7} $w={897} $h={29} $font="sans">{`[frxCostSrv."Name"]`}</Memo>
        </Band>
        <Band gap={5} kind="DetailData" name="DetailData1" data="frxCostLnk" mark h={34}>
          <Memo $x={5} $y={1} $w={49} $h={28} $font="sans">[Line</Memo>
          <Memo $x={64} $y={1} $w={598} $h={39} $font="sans">{`[frxCostLnk."Name"]`}</Memo>
          <Memo $x={637} $y={1} $w={264} $h={39} $font="sans" $size={12} $mid $align="flex-end">{`[frxCostLnk."Calculation"]`}</Memo>
          <Memo $x={899} $y={1} $w={115} $h={28} $font="sans" $size={18}>[FormatFloat(</Memo>
        </Band>
        <Band gap={5} kind="Footer" name="Footer3" h={6}>
          <Rule $x={59} $y={-1} $w={961} $h={2} />
        </Band>
        <Band gap={4} kind="SubdetailData" name="SubdetailData1" data="frxCostValue" h={31}>
          <Memo $x={64} $y={1} $w={385} $h={29} $font="sans" $size={16}>{`[frxCostValue."Name"]`}</Memo>
          <Memo $x={458} $y={1} $w={443} $h={29} $font="sans" $size={16}>{`[frxCostValue."Description"]`}</Memo>
          <Memo $x={696} $y={1} $w={205} $h={29} $font="sans" $size={16} $align="flex-end">{`[frxCostValue."Calculation"]`}</Memo>
        </Band>
        <Band gap={3} kind="Footer" name="Footer1" h={2} />
        <Band gap={3} kind="Header" name="Header2" mark h={120}>
          {[7, 36].map(y => (
            <React.Fragment key={y}>
              <Memo $x={515} $y={y} $w={385} $h={28} $font="sans">{y === 7 ? "Полевые" : ""}</Memo>
              <Memo $x={849} $y={y} $w={51} $h={28} />
              <Memo $x={899} $y={y} $w={115} $h={28} $font="sans" $size={18}>{y === 7 ? "[FormatFloat(" : ""}</Memo>
            </React.Fragment>
          ))}
        </Band>
      </Margins>
    </Paper>
  );
}

function ReportTree() {
  return (
    <TreeRows $face={SANS}>
      <TreeRow $pad={3}>
        <svg width="16" height="16">
          <path d="M1 10v3l7 3 8-7v-3z" fill="#fff" stroke="#000" />
          <path d="M0.500 9l8-8 7 4-7 8z" fill="#008000" stroke="#003000" />
        </svg>
        <TreeText $sel>Report</TreeText>
      </TreeRow>
      <TreeRow $pad={7}>
        <Toggle /><TreeLine $w={7} $v="none" $h />
        <svg width="16" height="16">
          <path d="M2 2l3-1 3 3 3-3h4v12h-5l-2 2-2-2-4-1z" fill="#fff" stroke="#000" /><path d="M1.500 2v10l6 2.500h7" stroke="#006000" fill="none" strokeWidth="1.500" /><path d="M8 4v10" stroke="#808080" />
        </svg>
        <TreeText>Page1</TreeText>
      </TreeRow>
      <TreeRow $pad={26}>
        <Toggle /><TreeLine $w={7} $v="none" $h />
        <svg width="15" height="7" shapeRendering="crispEdges">
          <path d="M0 0h15v7h-15z" fill="#808080" /><path d="M1 3h13v3h-13z" fill="#fff" /><path d="M0 0h15v2h-15z" fill="#008000" />
        </svg>
        <TreeText $gap={4}>ReportTitle1</TreeText>
      </TreeRow>
      {["Memo1", "Memo2", "Memo3"].map(n => (
        <TreeRow key={n} $pad={30}>
          <TreeLine $w={19} /><TreeLine $w={11} $h />
          <svg width="16" height="8"><circle cx="8" cy="4" r="2.500" fill="#00a000" stroke="#005000" /></svg>
          <TreeText $gap={4}>{n}</TreeText>
        </TreeRow>
      ))}
    </TreeRows>
  );
}

function FieldTree() {
  return (
    <TreeRows>
      {fieldGroups.map((g, gi) => (
        <React.Fragment key={gi}>
          {g.name && (
            <TreeRow $pad={7}>
              <Toggle /><TreeLine $w={8} $v="none" $h />
              <TreeLine $w={3} $v="none" />
              <DatasetIcon />
              <TreeText $bold $gap={7}>{g.name}</TreeText>
            </TreeRow>
          )}
          {g.fields.map((f, i) => (
            <TreeRow key={f} $pad={11}>
              <TreeLine $w={19} $v={gi === fieldGroups.length - 1 ? "none" : "full"} />
              <TreeLine $w={12} $v={i === g.fields.length - 1 ? "top" : "full"} $h />
              <TreeLine $w={2} $v="none" />
              <FieldIcon />
              <TreeText>{f}</TreeText>
            </TreeRow>
          ))}
        </React.Fragment>
      ))}
    </TreeRows>
  );
}

const PanelGrip = () => <Grip><GripLines /><CloseButton aria-label="Закрыть"><Cross /></CloseButton></Grip>;
const Spacer = styled.div<{ $h: number }>`height: ${p => p.$h}px; flex: none;`;

export default function App() {
  return (
    <Window>
      <GlobalStyle />
      <TitleBar>
        <svg width="17" height="17" viewBox="0 0 17 17">
          <path d="M1 5l4-4h8l3 4v7l-4 4h-8l-3-4z" fill="#e01010" />
          <path d="M6 3v11M6 9l5-6M6 8l5 6" stroke="#fff" strokeWidth="2" fill="none" />
          <path d="M11 5h4l-1 4-2 2h3" stroke="#ffa060" strokeWidth="2" fill="none" />
        </svg>
        <TitleText>FastReport - Смета2.fr3</TitleText>
        <CaptionButton aria-label="Свернуть"><svg width="10" height="8" shapeRendering="crispEdges"><path d="M1 6h6v2h-6z" /></svg></CaptionButton>
        <CaptionButton aria-label="Развернуть"><svg width="10" height="9" shapeRendering="crispEdges"><path d="M3.500 .5h5v5h-2M3 1h6M1.500 3.500h5v4h-5zM1 4h6" fill="none" stroke="#000" /></svg></CaptionButton>
        <CaptionButton $apart aria-label="Закрыть"><svg width="8" height="8"><path d="M.5 .5l7 7M7.500 .5l-7 7" stroke="#000" strokeWidth="1.600" /></svg></CaptionButton>
      </TitleBar>
      <MenuBar>
        {["Файл", "Правка", "Отчет", "Вид", "?"].map(m => <MenuItem key={m}>{m}</MenuItem>)}
      </MenuBar>
      <Dock>
        <DockRow>
          <Toolbar>
            <GripDots />
            <Tool id="new" /><Tool id="open" /><Tool id="save" off /><Tool id="preview" /><Sep />
            <Tool id="addpage" /><Tool id="adddlg" /><Tool id="delpage" off /><Tool id="settings" /><Sep />
            <ToolButton aria-label="Функция"><Fx>fx</Fx></ToolButton><Sep />
            <Tool id="cut" /><Tool id="copy" /><Tool id="paste" off /><Tool id="brush" off /><Sep />
            <Tool id="undo" off /><Tool id="redo" off /><Sep />
            <Tool id="group" off /><Tool id="ungroup" off /><Sep />
            <Tool id="grid" on /><Tool id="snap" on /><Tool id="fit" />
            <FlatCombo $w={45} $filled $gap={5} aria-label="Масштаб"><BareSelect defaultValue="150%"><option>150%</option></BareSelect><ComboArrow /></FlatCombo>
          </Toolbar>
        </DockRow>
        <DockRow>
          <Toolbar>
            <GripDots />
            <FlatCombo $w={89} aria-label="Стиль"><BareSelect /><ComboArrow /></FlatCombo>
            <FlatCombo $w={141} aria-label="Шрифт"><BareSelect /><ComboArrow /></FlatCombo>
            <FlatCombo $w={36} $gap={5} aria-label="Размер"><BareSelect /><ComboArrow /></FlatCombo>
            <ToolButton disabled><Letter>B</Letter></ToolButton>
            <ToolButton disabled><Letter $slant>I</Letter></ToolButton>
            <ToolButton disabled><Letter $line>U</Letter></ToolButton><Sep />
            <Offs ids={["size", "fontcolor", "marker", "rotate"]} /><Sep />
            <Offs ids={["left", "center", "right", "justify"]} /><Sep />
            <Offs ids={["vtop", "vmid", "vbot"]} />
          </Toolbar>
          <Toolbar>
            <GripDots />
            <Offs ids={["ftop", "fbottom", "fleft", "fright"]} /><Sep />
            <Offs ids={["fall", "fnone", "fshadow"]} /><Sep />
            <Offs ids={["fill", "pen", "lines"]} />
            <FlatCombo $w={36} aria-label="Толщина"><BareSelect /><ComboArrow /></FlatCombo>
          </Toolbar>
        </DockRow>
      </Dock>
      <Body>
        <Palette>
          {["Выбор", "Рука", "Масштаб", "Текст", "Формат", "Бэнд"].map((n, i) => (
            <PaletteButton key={n} $on={i === 0} aria-label={n}>{paletteIcons[n]}</PaletteButton>
          ))}
          <PaletteButton><GreenLabel>ab</GreenLabel></PaletteButton>
          {["Рисунок", "Вложенный отчет", "Маркер"].map(n => <PaletteButton key={n} aria-label={n}>{paletteIcons[n]}</PaletteButton>)}
          <PaletteButton><GreenLabel>#Σ</GreenLabel></PaletteButton>
          {["Фигура", "Диаграмма"].map(n => <PaletteButton key={n} aria-label={n}>{paletteIcons[n]}</PaletteButton>)}
        </Palette>
        <Designer>
          <TabStrip $h={21}>
            <Tab $w={41} $big>Код</Tab>
            <Tab $w={46} $big $on>Page1</Tab>
          </TabStrip>
          <TabPage>
            <SidePanel $side="l">
              <PanelGrip />
              <TreeBox $h={99}>
                <ReportTree />
                <ScrollBar before={0} thumb={9} after={56} />
              </TreeBox>
              <Spacer $h={4} />
              <PanelGrip />
              <ComboBox aria-label="Объект">
                <BareSelect defaultValue="frxReport: TfrxReport"><option>frxReport: TfrxReport</option></BareSelect>
                <Drop><Triangle /></Drop>
              </ComboBox>
              <TabStrip $h={23}>
                <Tab $w={61} $on>Свойства</Tab>
                <Tab $w={56}>События</Tab>
              </TabStrip>
              <GridBox>
                <PropTable>
                  <tbody>
                    {properties.map(p => (
                      <tr key={p.name}>
                        <th scope="row"><PropName $sel={p.sel}>{p.group ? <Toggle plus /> : <NoToggle />}{p.name}</PropName></th>
                        <td><PropValue $sel={p.sel}>{p.value}{p.sel && <Drop><Triangle /></Drop>}</PropValue></td>
                      </tr>
                    ))}
                  </tbody>
                </PropTable>
              </GridBox>
              <HintBox>
                <HintTitle>DataSet</HintTitle>
                <div>Набор данных, к которому привязан объект</div>
              </HintBox>
            </SidePanel>
            <Center>
              <TopRuler><Ticks cm={23} cursor={11.27} /></TopRuler>
              <SideRuler><Ticks vertical cm={18} cursor={4.04} /></SideRuler>
              <Workspace>
                <Canvas><Report /></Canvas>
                <ScrollBar before={0} thumb={120} after={880} />
              </Workspace>
            </Center>
            <SidePanel $side="r">
              <PanelGrip />
              <WideTabs $first><WideTab $edge $w={114}>Функции</WideTab><WideTab>Классы</WideTab></WideTabs>
              <WideTabs><WideTab $on $edge $w={101}>Поля БД</WideTab><WideTab>Переменные</WideTab></WideTabs>
              <Spacer $h={3} />
              <TreeBox>
                <FieldTree />
                <ScrollBar before={375} thumb={550} after={2} />
              </TreeBox>
              <Checks>
                <CheckLine><CheckInput type="checkbox" defaultChecked />Вставлять поле</CheckLine>
                <CheckLine><CheckInput type="checkbox" />Вставлять заголовок</CheckLine>
              </Checks>
            </SidePanel>
          </TabPage>
        </Designer>
      </Body>
      <StatusBar>
        <StatusCell $w={75}>Сантиметры</StatusCell>
        <StatusCell $w={228}>
          <StatusPair>
            <svg width="16" height="14" shapeRendering="crispEdges" fill="none" stroke="#000"><path d="M0 2.500h6M4.500 0v4" /><path d="M4.500 2.500h10v10h-10z" strokeDasharray="1 1" /></svg>
            11,27; 4,04
          </StatusPair>
          <StatusPair>
            <svg width="16" height="14" shapeRendering="crispEdges" fill="none" stroke="#000"><path d="M5 1.500h10M12.500 0v3M2.500 3v10M1 11.500h4M0 3.500h5M0 13.500h5" /><path d="M6.500 3.500h8v10h-8z" strokeDasharray="1 1" /></svg>
            0,00; 0,00
          </StatusPair>
        </StatusCell>
        <StatusCell>frxReport</StatusCell>
      </StatusBar>
    </Window>
  );
}
